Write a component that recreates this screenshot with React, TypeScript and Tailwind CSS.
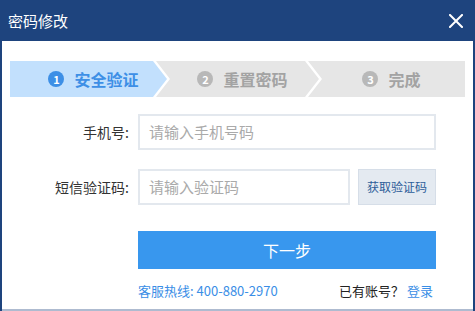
import React from "react";

const font = "font-['Noto_Sans_CJK_SC','Noto_Sans',sans-serif]";

function StepNum({ n, active }: { n: number; active?: boolean }) {
  return (
    <span
      className={`flex items-center justify-center w-[16px] h-[16px] rounded-full text-[11px] font-bold text-white leading-none ${
        active ? "bg-[#3d8fe6]" : "bg-[#b8b8b8]"
      }`}
    >
      {n}
    </span>
  );
}

export default function App() {
  return (
    <div className={`w-[475px] h-[311px] bg-[#1e447e] flex flex-col ${font}`}>
      {/* header */}
      <div className="h-[41px] flex items-center justify-between pl-[8px] pr-[12px]">
        <span className="text-[15px] text-white leading-none">密码修改</span>
        <svg width="14" height="14" viewBox="0 0 14 14" className="mt-[1px]">
          <path d="M1 1 L13 13 M13 1 L1 13" stroke="#fff" strokeWidth="2" strokeLinecap="square" />
        </svg>
      </div>

      {/* body */}
      <div className="flex-1 bg-white mx-[2px] border-b-2 border-[#aebbd0]">
        {/* steps */}
        <div className="mt-[20px] mx-[8px] h-[36px] flex">
          <div className="w-[157px] h-full bg-[#c2e0fd] flex items-center justify-center gap-[10px] pl-[10px] [clip-path:polygon(0_0,calc(100%_-_14px)_0,100%_50%,calc(100%_-_14px)_100%,0_100%)]">
            <StepNum n={1} active />
            <span className="text-[16px] font-bold text-[#3d8fe6]">安全验证</span>
          </div>
          <div className="w-[163px] ml-[-11px] h-full bg-[#e6e6e6] flex items-center justify-center gap-[10px] pl-[10px] [clip-path:polygon(0_0,calc(100%_-_14px)_0,100%_50%,calc(100%_-_14px)_100%,0_100%,14px_50%)]">
            <StepNum n={2} />
            <span className="text-[16px] font-bold text-[#a3a3a3]">重置密码</span>
          </div>
          <div className="w-[157px] ml-[-11px] h-full bg-[#e6e6e6] flex items-center justify-center gap-[10px] pl-[10px] [clip-path:polygon(0_0,100%_0,100%_100%,0_100%,14px_50%)]">
            <StepNum n={3} />
            <span className="text-[16px] font-bold text-[#a3a3a3]">完成</span>
          </div>
        </div>

        {/* phone */}
        <div className="mt-[17px] flex items-center">
          <label className="w-[127px] text-right text-[14px] text-[#333]">手机号:</label>
          <div className="ml-[9px] w-[298px] h-[36px] border-2 border-[#e3e8ee] flex items-center px-[9px] text-[15px] text-[#aaa]">
            请输入手机号码
          </div>
        </div>

        {/* sms code */}
        <div className="mt-[19px] flex items-center">
          <label className="w-[127px] text-right text-[14px] text-[#333]">短信验证码:</label>
          <div className="ml-[9px] w-[212px] h-[36px] border-2 border-[#e3e8ee] flex items-center px-[9px] text-[15px] text-[#aaa]">
            请输入验证码
          </div>
          <button className="ml-[8px] w-[78px] h-[36px] bg-[#e4eaf1] border border-[#d6dee8] text-[12px] text-[#2d5d99]">
            获取验证码
          </button>
        </div>

        {/* next */}
        <button className="mt-[26px] ml-[136px] w-[298px] h-[38px] bg-[#3897ee] text-white text-[16px] flex items-center justify-center">
          下一步
        </button>

        {/* footer */}
        <div className="mt-[13px] ml-[136px] w-[295px] flex justify-between text-[13px] leading-[18px]">
          <span className="text-[#3a8ee6]">客服热线: 400-880-2970</span>
          <span className="text-[#222]">
            已有账号？ <span className="text-[#3a8ee6]">登录</span>
          </span>
        </div>
      </div>
    </div>
  );
}
